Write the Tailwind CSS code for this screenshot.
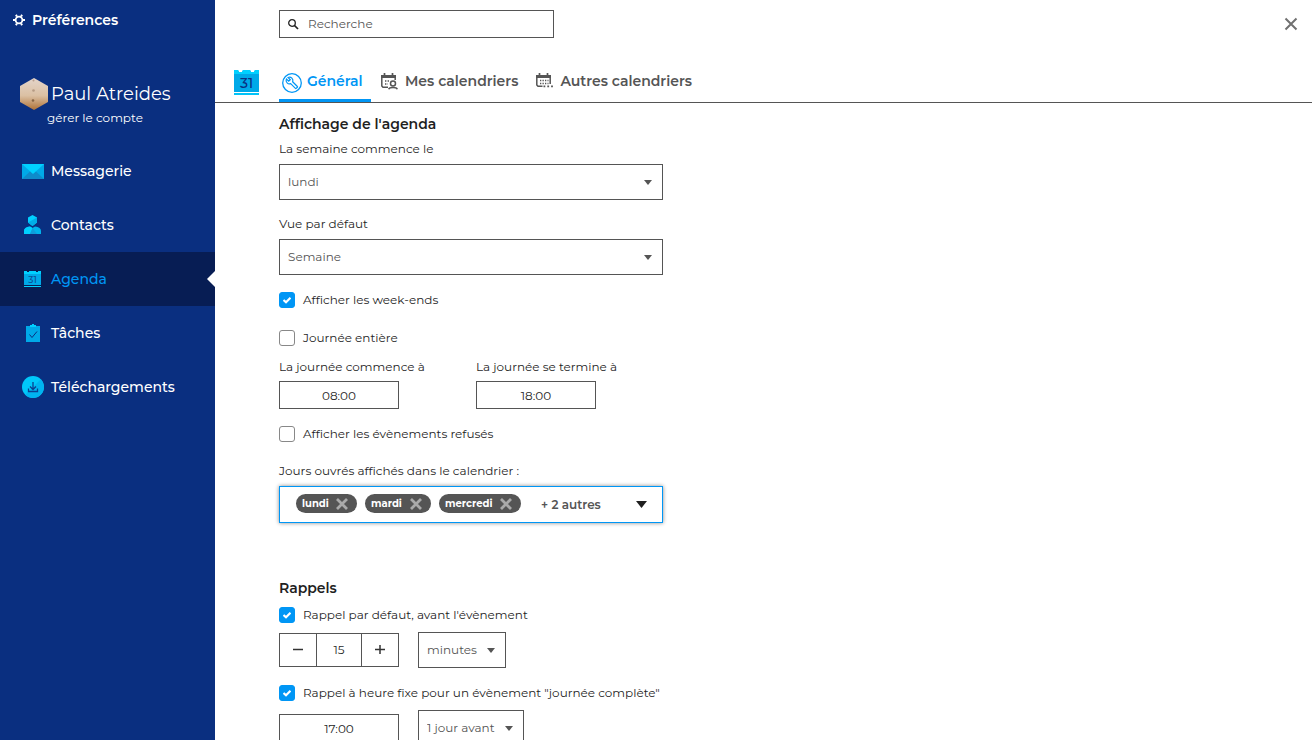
<!DOCTYPE html>
<html lang="fr">
<head>
    <meta charset="UTF-8">
    <meta name="viewport" content="width=device-width, initial-scale=1.0">
    <title>Préférences</title>
    <script src="https://cdn.jsdelivr.net/npm/@tailwindcss/browser@4"></script>
</head>
<body class="flex h-screen overflow-hidden bg-white font-['Montserrat','Inter',sans-serif] text-[12px] leading-5 text-[#1f1f1f]">
    <!-- Barre latérale -->
    <aside class="w-[215px] shrink-0 bg-[#0a2f80] text-white">
        <h1 class="flex items-center gap-[7px] pl-[13px] pt-[10px] text-[14px] font-semibold">
            <svg class="size-3" viewBox="0 0 12 12" fill="none" stroke="currentColor">
                <circle cx="6" cy="6" r="3.4" stroke-width="1.800"/>
                <path d="M3.900 2.600 3 .8M8.100 2.600 9 .8M9.800 6H12M8.100 9.400l.9 1.800M3.900 9.400 3 11.200M2.200 6H0" stroke-width="2"/>
            </svg>
            Préférences
        </h1>

        <div class="mt-12 flex items-center gap-[3px] pl-5">
            <svg class="h-8 w-7" viewBox="0 0 28 32">
                <defs>
                    <linearGradient id="sable" x1="0" y1="0" x2="0" y2="1">
                        <stop offset="0" stop-color="#e4d5cb"/>
                        <stop offset=".55" stop-color="#dbc0a3"/>
                        <stop offset="1" stop-color="#ae7238"/>
                    </linearGradient>
                </defs>
                <path d="M14 0 28 8V24L14 32 0 24V8Z" fill="url(#sable)"/>
                <circle cx="13.500" cy="2.500" r="1" fill="#b99e8b"/>
                <circle cx="13.500" cy="12.500" r="1.300" fill="#b69b84"/>
                <circle cx="13" cy="22.500" r="1.300" fill="#876443"/>
            </svg>
            <span class="text-[18px]">Paul Atreides</span>
        </div>
        <a href="#" class="mt-[-2px] block pl-[47px]">gérer le compte</a>

        <nav class="mt-4 text-[14px] font-medium">
            <a href="#" class="flex h-[54px] items-center gap-[7px] pl-[22px]">
                <svg class="size-[22px]" viewBox="0 0 22 22">
                    <path d="M0 4H22V19H0Z" fill="#00a9e8"/>
                    <path d="M0 19 8.500 11H13.500L22 19Z" fill="#0e8bcb"/>
                    <path d="M0 4H22L11 14Z" fill="#00d0ff"/>
                </svg>
                Messagerie
            </a>
            <a href="#" class="flex h-[54px] items-center gap-[7px] pl-[22px]">
                <svg class="size-[22px]" viewBox="0 0 22 22">
                    <path d="M10.500 1 15 3.500V8.500L10.500 12 6 8.500V3.500Z" fill="#00d0ff"/>
                    <path d="M15 3.500V8.500L10.500 12 6 8.500Z" fill="#00aee8"/>
                    <path d="M2 20V17Q2 13 8 12.500L10.500 14 13 12.500Q19 13 19 17V20Z" fill="#00b3ec"/>
                    <path d="M2 20V17Q2 13 8 12.500L10.500 14 8 20Z" fill="#00d0ff"/>
                    <path d="M10.500 14 15 20H8Z" fill="#0e9ddb"/>
                </svg>
                Contacts
            </a>
            <a href="#" aria-current="page" class="relative flex h-[54px] items-center gap-[7px] bg-[#071d54] pl-[22px] text-[#0096f5]">
                <svg class="size-[22px]" viewBox="0 0 22 22">
                    <path d="M2 3H5V4H7V3H14V4H16V3H19V17H2Z" fill="#00a9e8"/>
                    <path d="M2 3H5V4H7V3H14V4H16V3H19V6H2Z" fill="#00d0ff"/>
                    <path d="M2 18H19V19H2Z" fill="#00d0ff"/>
                    <text x="10.500" y="14.500" text-anchor="middle" font-size="9" font-weight="500" fill="#0b4c96">31</text>
                </svg>
                Agenda
                <svg class="absolute right-0 top-[19px] h-4 w-2" viewBox="0 0 8 16"><path d="M8 0V16L0 8Z" fill="#fff"/></svg>
            </a>
            <a href="#" class="flex h-[54px] items-center gap-[7px] pl-[22px]">
                <svg class="size-[22px]" viewBox="0 0 22 22">
                    <path d="M4 4H8V3H10V2H12V3H14V4H18V20H4Z" fill="#00a9e8"/>
                    <path d="M8 3H10V2H12V3H14V5H8Z" fill="#00d0ff"/>
                    <path d="M7.500 12.500 10 15.500 15 9.500" fill="none" stroke="#0a2f80"/>
                </svg>
                Tâches
            </a>
            <a href="#" class="flex h-[54px] items-center gap-[7px] pl-[22px]">
                <svg class="size-[22px]" viewBox="0 0 22 22">
                    <circle cx="11" cy="11" r="11" fill="#00c8fa"/>
                    <path d="M18.800 3.200A11 11 0 0 1 3.200 18.800Z" fill="#00b4f0"/>
                    <path d="M11 6V13M8 10.500 11 13.500 14 10.500M6.500 12.500V15.500H15.500V12.500" fill="none" stroke="#0a3f90" stroke-width="1.300"/>
                </svg>
                Téléchargements
            </a>
        </nav>
    </aside>

    <main class="min-w-0 flex-1">
        <header class="border-b border-[#555] pt-[10px]">
            <div class="flex items-start justify-between pl-16 pr-[14px]">
                <label class="flex h-7 w-[275px] items-center gap-[9px] border border-[#555] px-[7px]">
                    <svg class="size-3 shrink-0" viewBox="0 0 12 12" fill="none" stroke="#222" stroke-width="1.300">
                        <circle cx="5" cy="5" r="3.300"/>
                        <path d="M7.500 7.500 11 11" stroke-width="1.700"/>
                    </svg>
                    <input type="search" aria-label="Recherche" placeholder="Recherche" class="min-w-0 flex-1 outline-none placeholder:text-[#555]">
                </label>
                <button type="button" aria-label="Fermer" class="mt-[7px]">
                    <svg class="size-[14px]" viewBox="0 0 14 14" fill="none" stroke="#707070" stroke-width="2"><path d="M1.500 1.500 12.500 12.500M12.500 1.500 1.500 12.500"/></svg>
                </button>
            </div>

            <!-- Onglets -->
            <div class="mt-[22px] flex h-[42px] pl-[18px] text-[14px] font-semibold text-[#555]">
                <svg class="mr-[19px] mt-2 h-7 w-[27px] shrink-0" viewBox="0 0 27 28">
                    <path d="M1 2H5L6 4H9L10 2H17L18 4H21L22 2H26V24H1Z" fill="#00a9e8"/>
                    <path d="M1 2H5L6 4H9L10 2H17L18 4H21L22 2H26V6H1Z" fill="#00d0ff"/>
                    <path d="M1 25H26V27H1Z" fill="#00c3f8"/>
                    <text x="13.500" y="20" text-anchor="middle" font-size="14" font-weight="500" fill="#0a2f80">31</text>
                </svg>
                <a href="#" class="flex w-[92px] items-center gap-[5px] border-b-[3px] border-[#0096f5] pl-[3px] pt-[3px] text-[#0096f5]">
                    <svg class="h-6 w-5 shrink-0" viewBox="0 -4 20 24" fill="none" stroke="currentColor">
                        <circle cx="10" cy="10" r="9.300" stroke-width="1.300"/>
                        <path transform="translate(3.600 3.600) scale(.52)" stroke-width="2.300" d="M22.700 19l-9.100-9.100c.9-2.300.4-5-1.500-6.900-2-2-5-2.400-7.400-1.300L9 6 6 9 1.600 4.700C.4 7.100.9 10.100 2.900 12.100c1.900 1.900 4.600 2.400 6.900 1.500l9.100 9.100c.4.4 1 .4 1.400 0l2.300-2.300c.5-.4.5-1.100.1-1.400z"/>
                    </svg>
                    Général
                </a>
                <a href="#" class="ml-[10px] flex items-center gap-[7px]">
                    <svg class="size-[17px] shrink-0" viewBox="0 0 17 17" fill="none" stroke="currentColor">
                        <path d="M0 2H15V5H0Z" fill="currentColor" stroke="none"/>
                        <path d="M3.500 0V3M11.500 0V3" stroke-width="1.700"/>
                        <path d="M.8 4V13L2 14.300H7M14.200 4V7" stroke-width="1.500"/>
                        <path d="M4 8H9M4 11H7" stroke-width="1.400" stroke-dasharray="1.400 1.200"/>
                        <circle cx="12" cy="10.500" r="2.500" stroke-width="1.500"/>
                        <path d="M7.700 16.200Q8.200 14.400 12 14.400T16.300 16.200" stroke-width="1.500"/>
                    </svg>
                    Mes calendriers
                </a>
                <a href="#" class="ml-[18px] flex items-center gap-[7px]">
                    <svg class="size-[17px] shrink-0" viewBox="0 0 17 17" fill="none" stroke="currentColor">
                        <path d="M0 2H15V5H0Z" fill="currentColor" stroke="none"/>
                        <path d="M3.500 0V3M11.500 0V3" stroke-width="1.700"/>
                        <path d="M.8 4V12L2 13.300H6.500M14.200 4V11" stroke-width="1.500"/>
                        <path d="M4 7.500H12.500M4 10.500H12.500" stroke-width="1.300" stroke-dasharray="1.300 1.200"/>
                        <path d="M7.500 13.300H17" stroke-width="1.800" stroke-dasharray="1.800 2"/>
                    </svg>
                    Autres calendriers
                </a>
            </div>
        </header>

        <form class="pl-16 pt-[11px]">
            <h2 class="text-[14px] font-semibold">Affichage de l'agenda</h2>

            <label for="debut-semaine" class="mt-[5px] block">La semaine commence le</label>
            <div class="mt-[5px] grid w-96 items-center text-[#555]">
                <select id="debut-semaine" class="col-start-1 row-start-1 h-9 appearance-none border border-[#555] px-2">
                    <option>lundi</option>
                </select>
                <svg class="pointer-events-none col-start-1 row-start-1 mr-[11px] h-[5px] w-2 justify-self-end" viewBox="0 0 8 5"><path d="M0 0H8L4 5Z" fill="currentColor"/></svg>
            </div>

            <label for="vue" class="mt-[14px] block">Vue par défaut</label>
            <div class="mt-[5px] grid w-96 items-center text-[#555]">
                <select id="vue" class="col-start-1 row-start-1 h-9 appearance-none border border-[#555] px-2">
                    <option>Semaine</option>
                </select>
                <svg class="pointer-events-none col-start-1 row-start-1 mr-[11px] h-[5px] w-2 justify-self-end" viewBox="0 0 8 5"><path d="M0 0H8L4 5Z" fill="currentColor"/></svg>
            </div>

            <label class="mt-[15px] flex items-center gap-2">
                <span class="grid place-items-center">
                    <input type="checkbox" checked class="peer col-start-1 row-start-1 size-4 appearance-none rounded-[3px] border border-[#888] checked:border-[#0096f5] checked:bg-[#0096f5]">
                    <svg class="pointer-events-none invisible col-start-1 row-start-1 size-2 peer-checked:visible" viewBox="0 0 8 8" fill="none" stroke="#fff" stroke-width="2.200"><path d="M.5 4 3 6.300 7.500 1.800"/></svg>
                </span>
                Afficher les week-ends
            </label>
            <label class="mt-[18px] flex items-center gap-2">
                <input type="checkbox" class="size-4 appearance-none rounded-[3px] border border-[#888]">
                Journée entière
            </label>

            <div class="mt-[9px] flex">
                <div class="w-[197px]">
                    <label for="debut-journee" class="block">La journée commence à</label>
                    <input id="debut-journee" type="text" value="08:00" class="mt-1 block h-7 w-[120px] border border-[#555] text-center">
                </div>
                <div>
                    <label for="fin-journee" class="block">La journée se termine à</label>
                    <input id="fin-journee" type="text" value="18:00" class="mt-1 block h-7 w-[120px] border border-[#555] text-center">
                </div>
            </div>

            <label class="mt-[15px] flex items-center gap-2">
                <input type="checkbox" class="size-4 appearance-none rounded-[3px] border border-[#888]">
                Afficher les évènements refusés
            </label>

            <!-- Jours ouvrés -->
            <p id="jours-ouvres" class="mt-[17px]">Jours ouvrés affichés dans le calendrier :</p>
            <div role="group" aria-labelledby="jours-ouvres" class="mt-[5px] flex h-[37px] w-96 items-center border border-[#0096f5] pl-4 pr-[15px] shadow-[0_0_4px_#888]">
                <div class="flex gap-2 pb-[2px] text-[10px] font-bold text-white">
                    <span class="flex h-[19px] w-[61px] items-center justify-between rounded-full bg-[#555] pl-[6px] pr-[9px]">lundi
                        <button type="button" aria-label="Retirer lundi"><svg class="size-3" viewBox="0 0 12 12" fill="none" stroke="#aaa" stroke-width="2.800"><path d="M1 1 11 11M11 1 1 11"/></svg></button>
                    </span>
                    <span class="flex h-[19px] w-[66px] items-center justify-between rounded-full bg-[#555] pl-[6px] pr-[9px]">mardi
                        <button type="button" aria-label="Retirer mardi"><svg class="size-3" viewBox="0 0 12 12" fill="none" stroke="#aaa" stroke-width="2.800"><path d="M1 1 11 11M11 1 1 11"/></svg></button>
                    </span>
                    <span class="flex h-[19px] w-[82px] items-center justify-between rounded-full bg-[#555] pl-[6px] pr-[9px]">mercredi
                        <button type="button" aria-label="Retirer mercredi"><svg class="size-3" viewBox="0 0 12 12" fill="none" stroke="#aaa" stroke-width="2.800"><path d="M1 1 11 11M11 1 1 11"/></svg></button>
                    </span>
                </div>
                <span class="ml-5 font-semibold text-[#555]">+ 2 autres</span>
                <button type="button" aria-label="Ouvrir la liste" class="ml-auto">
                    <svg class="h-[7px] w-[11px]" viewBox="0 0 11 7"><path d="M0 0H11L5.500 7Z" fill="#1f1f1f"/></svg>
                </button>
            </div>

            <h2 class="mt-[55px] text-[14px] font-semibold">Rappels</h2>

            <label class="mt-[7px] flex items-center gap-2">
                <span class="grid place-items-center">
                    <input type="checkbox" checked class="peer col-start-1 row-start-1 size-4 appearance-none rounded-[3px] border border-[#888] checked:border-[#0096f5] checked:bg-[#0096f5]">
                    <svg class="pointer-events-none invisible col-start-1 row-start-1 size-2 peer-checked:visible" viewBox="0 0 8 8" fill="none" stroke="#fff" stroke-width="2.200"><path d="M.5 4 3 6.300 7.500 1.800"/></svg>
                </span>
                Rappel par défaut, avant l'évènement
            </label>
            <div class="mt-[7px] flex items-center gap-[19px]">
                <div class="flex h-[34px] w-[120px] divide-x divide-[#555] border border-[#555]">
                    <button type="button" aria-label="Moins" class="grid w-[37px] place-items-center">
                        <svg class="size-[10px]" viewBox="0 0 10 10" stroke="#333" stroke-width="1.500"><path d="M0 4.500H10"/></svg>
                    </button>
                    <input type="text" value="15" aria-label="Durée du rappel" class="min-w-0 flex-1 text-center">
                    <button type="button" aria-label="Plus" class="grid w-9 place-items-center">
                        <svg class="size-[10px]" viewBox="0 0 10 10" stroke="#333" stroke-width="1.500"><path d="M0 4.500H10M5 0V9"/></svg>
                    </button>
                </div>
                <div class="grid w-[88px] items-center text-[#555]">
                    <select aria-label="Unité du rappel" class="col-start-1 row-start-1 h-9 appearance-none border border-[#555] pl-2">
                        <option>minutes</option>
                    </select>
                    <svg class="pointer-events-none col-start-1 row-start-1 mr-[11px] h-[5px] w-2 justify-self-end" viewBox="0 0 8 5"><path d="M0 0H8L4 5Z" fill="currentColor"/></svg>
                </div>
            </div>

            <label class="mt-[15px] flex items-center gap-2">
                <span class="grid place-items-center">
                    <input type="checkbox" checked class="peer col-start-1 row-start-1 size-4 appearance-none rounded-[3px] border border-[#888] checked:border-[#0096f5] checked:bg-[#0096f5]">
                    <svg class="pointer-events-none invisible col-start-1 row-start-1 size-2 peer-checked:visible" viewBox="0 0 8 8" fill="none" stroke="#fff" stroke-width="2.200"><path d="M.5 4 3 6.300 7.500 1.800"/></svg>
                </span>
                Rappel à heure fixe pour un évènement "journée complète"
            </label>
            <div class="mt-[7px] flex items-center gap-[19px]">
                <input type="text" value="17:00" aria-label="Heure du rappel" class="h-7 w-[120px] border border-[#555] text-center">
                <div class="grid w-[106px] items-center text-[#555]">
                    <select aria-label="Jour du rappel" class="col-start-1 row-start-1 h-9 appearance-none border border-[#555] pl-2">
                        <option>1 jour avant</option>
                    </select>
                    <svg class="pointer-events-none col-start-1 row-start-1 mr-[11px] h-[5px] w-2 justify-self-end" viewBox="0 0 8 5"><path d="M0 0H8L4 5Z" fill="currentColor"/></svg>
                </div>
            </div>
        </form>
    </main>
</body>
</html>
